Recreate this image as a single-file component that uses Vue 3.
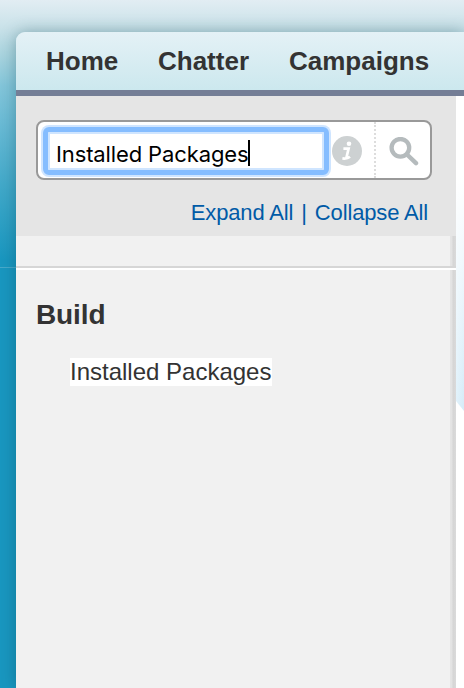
<template>
  <div class="setup-page">
    <div class="setup-page__seam" />
    <div class="setup-page__window">
      <nav class="tab-bar">
        <a
          v-for="tab in tabs"
          :key="tab.label"
          class="tab-bar__tab"
          :class="`tab-bar__tab--${tab.id}`"
        >{{ tab.label }}</a>
      </nav>

      <div class="setup-page__body">
        <aside class="sidebar">
          <div class="sidebar__search">
            <div class="search-box">
              <div class="search-box__field" @click="focused = true">
                <span class="search-box__text">{{ query }}</span>
                <span v-if="focused" class="search-box__caret" />
              </div>
              <svg class="search-box__info" viewBox="0 0 30 30" aria-hidden="true">
                <circle cx="15" cy="15" r="15" fill="#cdd1d2" />
                <circle cx="17" cy="7.8" r="2.3" fill="#fff" />
                <path
                  d="M11.4 12.6h5.2l-2.3 9.6M10.4 22.4c3 .4 5.4.2 7.6-1.6"
                  fill="none"
                  stroke="#fff"
                  stroke-width="2.7"
                />
              </svg>
              <button class="search-box__button" type="button" aria-label="Search">
                <svg viewBox="0 0 30 30" aria-hidden="true">
                  <circle cx="11.4" cy="10.8" r="8.8" fill="none" stroke="#b5bbbd" stroke-width="4.3" />
                  <path d="M18 17.5 27 26.2" fill="none" stroke="#b5bbbd" stroke-width="4.4" stroke-linecap="round" />
                </svg>
              </button>
            </div>
            <div class="sidebar__links">
              <a class="sidebar__expand">Expand All</a>
              <span class="sidebar__divider">|</span>
              <a class="sidebar__collapse">Collapse All</a>
            </div>
          </div>
          <div class="sidebar__spacer" />
          <section class="sidebar__section">
            <h2 class="sidebar__heading">Build</h2>
            <span class="sidebar__item">{{ query }}</span>
          </section>
        </aside>
        <main class="content">
          <div class="content__glow" />
        </main>
      </div>
    </div>
  </div>
</template>

<script setup>
import { ref } from "vue";

const query = ref("Installed Packages");
const focused = ref(true);

const tabs = [
  { id: "home", label: "Home" },
  { id: "chatter", label: "Chatter" },
  { id: "campaigns", label: "Campaigns" }
];
</script>

<style>
body {
  margin: 0;
  overflow: hidden;
}
</style>

<style scoped>
.setup-page {
  background: linear-gradient(#e2edf3 0, #c9e2e9 28px, #a9d4df 55px, #83c6da 86px, #6cbcd6 120px, #3fa8c9 190px, #1997c0 260px);
  box-sizing: border-box;
  font-family: "Liberation Sans", Arial, sans-serif;
  height: 688px;
  overflow: hidden;
  padding: 32px 0 0 16px;
  position: relative;
  width: 464px;
}

.setup-page__seam {
  background: #47aacb;
  height: 1px;
  left: 0;
  position: absolute;
  top: 267px;
  width: 16px;
}

.setup-page__window {
  border-top-left-radius: 9px;
  box-shadow: 0 0 16px rgba(0, 55, 70, 0.35);
  display: flex;
  flex-direction: column;
  height: 656px;
  overflow: hidden;
  position: relative;
}

.tab-bar {
  background: linear-gradient(#e4f1f6, #cce8ee);
  border-bottom: 6px solid #747e96;
  color: #333;
  display: flex;
  flex: none;
  font-size: 26px;
  font-weight: bold;
  height: 58px;
  line-height: 58px;
  padding-left: 30px;
  white-space: nowrap;
}

.tab-bar__tab {
  flex: none;
}

.tab-bar__tab--home {
  width: 112px;
}

.tab-bar__tab--chatter {
  width: 131px;
}

.setup-page__body {
  display: flex;
  flex: 1;
}

.sidebar {
  background: linear-gradient(90deg, #f1f1f1 434px, #e5e5e5 434px, #e2e2e2 436px, #d5d5d5 437px, #dadada 440px);
  flex: none;
  width: 440px;
}

.sidebar__search {
  background: #e5e5e5;
  box-sizing: border-box;
  height: 140px;
  padding: 24px 24px 0 20px;
}

.search-box {
  align-items: center;
  background: #fff;
  border: 2px solid #999;
  border-radius: 8px;
  box-sizing: border-box;
  display: flex;
  height: 60px;
  padding-left: 3px;
}

.search-box__field {
  align-items: center;
  background: #fff;
  border: 5px solid #85bdff;
  border-radius: 6px;
  box-shadow: 0 0 0 2px #cfe5ff, inset 0 0 0 2px #cfe5ff;
  box-sizing: border-box;
  display: flex;
  flex: none;
  height: 48px;
  margin-left: 2px;
  margin-top: 2px;
  padding-left: 8px;
  width: 286px;
}

.search-box__text {
  color: #000;
  font-family: Inter, "Liberation Sans", sans-serif;
  font-size: 22px;
  letter-spacing: -0.12px;
  line-height: 28px;
  padding-top: 5px;
  white-space: nowrap;
}

.search-box__caret {
  background: #000;
  height: 26px;
  margin-left: -1px;
  margin-top: 4px;
  width: 2px;
}

.search-box__info {
  flex: none;
  height: 30px;
  margin-left: 3px;
  margin-top: 2px;
  width: 30px;
}

.search-box__button {
  align-items: center;
  align-self: stretch;
  background: none;
  border: 0;
  border-left: 2px dotted #ddd;
  display: flex;
  flex: 1;
  margin-left: 12px;
  padding: 3px 0 0 13px;
}

.search-box__button svg {
  flex: none;
  height: 30px;
  width: 30px;
}

.sidebar__links {
  color: #015ba7;
  display: flex;
  font-size: 22px;
  justify-content: flex-end;
  letter-spacing: -0.15px;
  line-height: 26px;
  padding: 20px 4px 0 0;
  white-space: nowrap;
}

.sidebar__divider {
  padding: 0 8px;
}

.sidebar__spacer {
  border-bottom: 2px solid #fff;
  box-shadow: inset 0 -2px #d6d6d6;
  height: 32px;
}

.sidebar__section {
  padding: 29px 20px 0;
}

.sidebar__heading {
  color: #333;
  font-size: 28px;
  letter-spacing: -0.1px;
  line-height: 32px;
  margin: 0 0 27px;
}

.sidebar__item {
  background: #fff;
  color: #333;
  display: block;
  font-size: 24px;
  height: 28px;
  line-height: 28px;
  margin-left: 34px;
  white-space: nowrap;
  width: 202px;
}

.content {
  background: #fff;
  flex: 1;
}

.content__glow {
  background: linear-gradient(rgba(255, 255, 255, 1) 80px, rgba(255, 255, 255, 0) 310px), linear-gradient(90deg, #e1f2fb, #d6ecf8);
  clip-path: polygon(0 0, 100% 0, 100% 100%, 0 305px);
  height: 315px;
}
</style>
